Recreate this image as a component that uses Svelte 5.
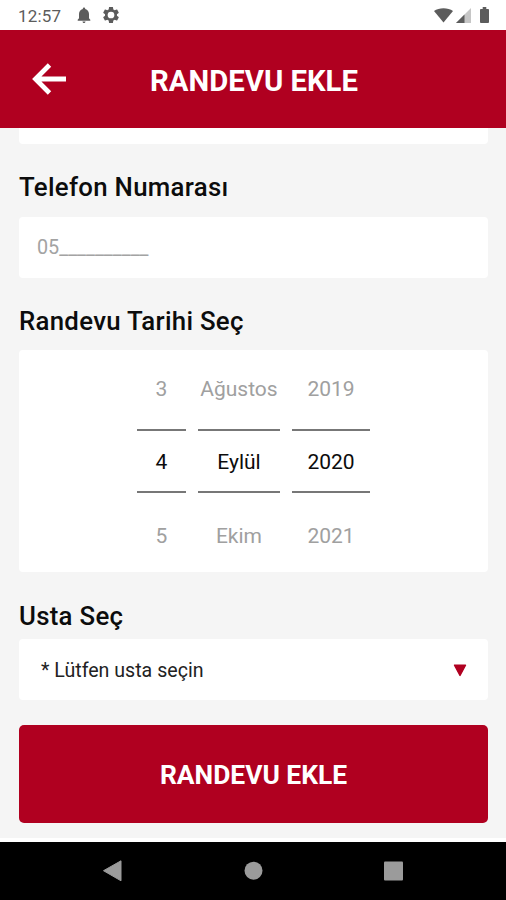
<script>
    const columns = [
        { name: 'day', values: ['3', '4', '5'] },
        { name: 'month', values: ['Ağustos', 'Eylül', 'Ekim'] },
        { name: 'year', values: ['2019', '2020', '2021'] }
    ];

    let phone = '';
</script>

<div class="screen">
    <div class="statusbar">
        <span class="clock">12:57</span>
        <svg class="bell" width="14" height="17" viewBox="0 0 14 17">
            <path d="M7 0.5c.8 0 1.2.6 1.2 1.4C10.800 2.500 12 4.600 12 7v4.300l1.300 1.500v.9H.7v-.9L2 11.300V7c0-2.400 1.200-4.500 3.800-5.100C5.800 1.100 6.200.5 7 .5z M5.500 14.500h3c0 .9-.6 1.500-1.500 1.500s-1.500-.6-1.500-1.500z" />
        </svg>
        <svg class="gear" width="16" height="16" viewBox="2 2 20 20">
            <path fill-rule="evenodd" d="M19.430 12.980c.04-.32.07-.64.07-.98s-.03-.66-.07-.98l2.110-1.650c.19-.15.24-.42.12-.64l-2-3.460c-.12-.22-.39-.3-.61-.22l-2.490 1c-.52-.4-1.080-.73-1.690-.98l-.38-2.650C14.460 2.180 14.250 2 14 2h-4c-.25 0-.46.18-.49.42l-.38 2.650c-.61.25-1.170.59-1.690.98l-2.490-1c-.23-.09-.49 0-.61.22l-2 3.460c-.13.22-.07.49.12.64l2.110 1.650c-.04.32-.07.65-.07.98s.03.66.07.98l-2.110 1.650c-.19.15-.24.42-.12.64l2 3.460c.12.22.39.3.61.22l2.490-1c.52.4 1.080.73 1.690.98l.38 2.650c.03.24.24.42.49.42h4c.25 0 .46-.18.49-.42l.38-2.650c.61-.25 1.170-.59 1.690-.98l2.490 1c.23.09.49 0 .61-.22l2-3.460c.12-.22.07-.49-.12-.64l-2.110-1.650zM12 16.200a4.200 4.200 0 1 1 0-8.400 4.200 4.200 0 0 1 0 8.400z" />
        </svg>
        <span class="spacer"></span>
        <svg class="wifi" width="19" height="15" viewBox="0 0 19 15">
            <path d="M0 3C5-.8 14-.8 19 3L9.500 14.500z" />
        </svg>
        <svg class="signal" width="15" height="15" viewBox="0 0 15 15">
            <path d="M15 0v15H0z" opacity="0.35" />
            <path d="M8.500 6.500V15H0z" />
        </svg>
        <svg class="battery" width="9" height="16" viewBox="0 0 10 17" preserveAspectRatio="none">
            <path d="M3 0h4v2h2q1 0 1 1v13q0 1-1 1H1q-1 0-1-1V3q0-1 1-1h2z" />
        </svg>
    </div>

    <header>
        <button class="back" aria-label="Geri">
            <svg width="34" height="32" viewBox="0 0 34 32">
                <path d="M34 16H4M17.500 2L3.500 16l14 14" fill="none" stroke="#fff" stroke-width="4.800" />
            </svg>
        </button>
        <h1>RANDEVU EKLE</h1>
    </header>

    <main>
        <div class="card previous"></div>

        <label class="title" for="phone">Telefon Numarası</label>
        <input id="phone" class="card phone" placeholder="05__________" bind:value={phone} />

        <div class="title date">Randevu Tarihi Seç</div>
        <div class="card picker">
            {#each columns as column}
                <div class="column {column.name}">
                    <span class="faded">{column.values[0]}</span>
                    <span class="selected">{column.values[1]}</span>
                    <span class="faded last">{column.values[2]}</span>
                </div>
            {/each}
        </div>

        <div class="title worker">Usta Seç</div>
        <div class="card select">
            <span>* Lütfen usta seçin</span>
            <svg width="14" height="13" viewBox="0 0 14 13">
                <path d="M1.500 1.200h11L7 11.500z" fill="#b00020" stroke="#b00020" stroke-width="1.400" stroke-linejoin="round" />
            </svg>
        </div>

        <button class="submit">RANDEVU EKLE</button>
    </main>

    <nav>
        <svg width="506" height="58" viewBox="0 0 506 58" fill="#9b9b9b">
            <path d="M103.500 28.700L121 18.800v20z" stroke="#9b9b9b" stroke-linejoin="round" />
            <circle cx="253.500" cy="28.700" r="9" />
            <rect x="384" y="19.500" width="19" height="19" rx="1" />
        </svg>
    </nav>
</div>

<style>
    :global(body) {
        margin: 0;
    }

    .screen {
        width: 506px;
        height: 900px;
        display: flex;
        flex-direction: column;
        overflow: hidden;
        background: #f5f5f5;
        font-family: Roboto, sans-serif;
        color: #0c0c0c;
    }

    .screen * {
        box-sizing: border-box;
    }

    /* Status bar */
    .statusbar {
        height: 30px;
        flex: none;
        display: flex;
        align-items: center;
        padding: 0 17px 0 18px;
        background: #fff;
        color: #5c5c5c;
        fill: #5c5c5c;
    }

    .clock {
        width: 59px;
        font-size: 17px;
        letter-spacing: 0.2px;
        line-height: 30px;
        padding-top: 2px;
    }

    .gear {
        margin-left: 12px;
    }

    .spacer {
        flex: 1;
    }

    .signal {
        margin-left: 3px;
    }

    .battery {
        margin-left: 9px;
    }

    /* Header */
    header {
        height: 98px;
        flex: none;
        display: grid;
        grid-template-columns: 98px 1fr 98px;
        align-items: center;
        background: #b00020;
        color: #fff;
    }

    button {
        border: none;
        padding: 0;
        font-family: inherit;
        cursor: pointer;
    }

    .back {
        height: 32px;
        padding-left: 32px;
        background: none;
        text-align: left;
    }

    .back svg {
        display: block;
    }

    h1 {
        margin: 4px 0 0 2px;
        font-size: 29.300px;
        font-weight: 700;
        line-height: 34px;
        text-align: center;
        white-space: nowrap;
    }

    /* Form */
    main {
        height: 710px;
        flex: none;
        display: flex;
        flex-direction: column;
        padding: 0 18px 0 19px;
    }

    .card {
        width: 469px;
        flex: none;
        background: #fff;
        border: none;
        border-radius: 4px;
    }

    .previous {
        height: 16px;
        border-radius: 0 0 4px 4px;
    }

    .title {
        height: 73px;
        padding-top: 27px;
        font-size: 25.800px;
        font-weight: 500;
        letter-spacing: 0.290px;
        line-height: 32px;
    }

    .phone {
        height: 61px;
        padding: 0 18px;
        font-family: inherit;
        font-size: 19.800px;
    }

    .phone::placeholder {
        color: #a3a3a3;
        opacity: 1;
    }

    .date {
        height: 72px;
    }

    .picker {
        height: 222px;
        display: flex;
        justify-content: center;
        gap: 12px;
    }

    .column {
        display: grid;
        grid-template-rows: 79px 64px 79px;
        text-align: center;
        font-size: 21px;
    }

    .day {
        width: 49px;
    }

    .month {
        width: 82px;
    }

    .year {
        width: 78px;
    }

    .faded {
        color: #a0a0a0;
        line-height: 79px;
    }

    .last {
        line-height: 86px;
    }

    .selected {
        border-top: 2px solid #777;
        border-bottom: 2px solid #777;
        line-height: 62px;
    }

    .worker {
        height: 67px;
        padding-top: 28px;
    }

    .select {
        height: 61px;
        display: flex;
        align-items: center;
        justify-content: space-between;
        padding: 2px 21px 0 22px;
        font-size: 19.600px;
        color: #222;
    }

    .submit {
        width: 469px;
        height: 98px;
        flex: none;
        margin-top: 25px;
        padding-top: 2px;
        border-radius: 5px;
        background: #b00020;
        color: #fff;
        font-size: 26.400px;
        font-weight: 700;
    }

    /* Android navigation */
    nav {
        height: 62px;
        flex: none;
        border-top: 4px solid #fff;
        background: #000;
    }

    nav svg {
        display: block;
    }
</style>
